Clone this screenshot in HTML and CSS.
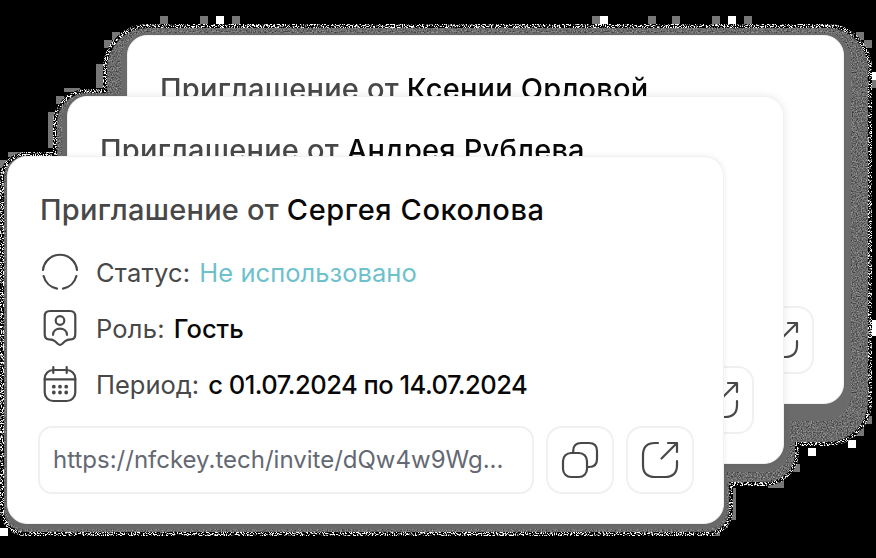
FILE: index.html
```html
<!DOCTYPE html>
<html lang="ru">
<head>
<meta charset="utf-8">
<title>Приглашения</title>
<link rel="stylesheet" href="styles.css">
</head>
<body>
<main class="stage">
  <svg class="halo" width="876" height="558" viewBox="0 0 876 558" aria-hidden="true">
    <defs>
      <filter id="speckle" x="0" y="0" width="876" height="558" filterUnits="userSpaceOnUse" color-interpolation-filters="sRGB">
        <feTurbulence type="fractalNoise" baseFrequency="0.9" numOctaves="2" seed="4"/>
        <feColorMatrix values="9 0 0 0 -4.4  9 0 0 0 -4.4  9 0 0 0 -4.4  0 0 0 0 1"/>
        <feComposite in2="SourceGraphic" operator="in"/>
      </filter>
      <filter id="grain" x="0" y="0" width="876" height="558" filterUnits="userSpaceOnUse" color-interpolation-filters="sRGB">
        <feTurbulence type="fractalNoise" baseFrequency="0.8" numOctaves="2" seed="9"/>
        <feColorMatrix values="0.7 0 0 0 0.07  0.7 0 0 0 0.07  0.7 0 0 0 0.07  0 0 0 0 1"/>
        <feComposite in2="SourceGraphic" operator="in"/>
      </filter>
    </defs>
    <g fill="#777">
      <path d="M160 16h8v8h-8zM200 16h8v8h-8zM232 16h8v8h-8zM592 16h8v8h-8zM648 16h8v8h-8zM672 16h8v8h-8zM712 16h8v8h-8zM744 16h8v8h-8zM112 32h8v8h-8zM104 40h8v8h-8zM96 64h8v24h-8zM56 96h8v8h-8zM48 112h8v36h-8zM64 88h16v4H64zM8 152h16v5H8zM0 160h8v8H0zM856 32h8v8h-8zM864 40h8v8h-8zM872 80h4v8h-4zM864 416h8v8h-8zM856 424h8v12h-8zM792 464h8v8h-8zM768 480h16v8h-16zM728 488h8v32h-8zM720 520h8v8h-8zM712 528h8v8h-8z"/>
      <path fill="#fff" d="M216 16h8v8h-8zM600 16h8v8h-8zM728 16h8v8h-8zM872 72h4v8h-4zM872 320h4v16h-4zM848 440h8v8h-8zM808 448h8v8h-8zM0 528h8v8H0z"/>
    </g>
    <g fill="none" stroke="#fff" stroke-width="4" filter="url(#speckle)">
      <rect x="105" y="26" width="765" height="418" rx="43"/>
      <rect x="55" y="91" width="742" height="393" rx="32"/>
      <rect x="2" y="154" width="729" height="380" rx="24"/>
    </g>
    <g filter="url(#grain)">
      <rect x="107" y="28" width="761" height="414" rx="41"/>
      <rect x="57" y="93" width="738" height="389" rx="30"/>
      <rect x="4" y="156" width="725" height="376" rx="22"/>
    </g>
    <g fill="#6b6b6b">
      <rect x="121" y="33" width="730" height="388" rx="27"/>
      <rect x="62" y="95" width="728" height="377" rx="25"/>
      <rect x="6" y="157" width="721" height="372" rx="21"/>
    </g>
  </svg>

  <article class="card card-back">
    <h2 class="title"><span class="muted title-label">Приглашение от</span> <span class="name-back">Ксении Орловой</span></h2>
    <div class="actions">
      <span class="button"><svg class="icon" viewBox="0 0 40 40"><use href="#open"/></svg></span>
    </div>
  </article>

  <article class="card card-middle">
    <h2 class="title"><span class="muted title-label">Приглашение от</span> <span class="name-middle">Андрея Рублева</span></h2>
    <div class="actions">
      <span class="button"><svg class="icon" viewBox="0 0 40 40"><use href="#open"/></svg></span>
    </div>
  </article>

  <article class="card card-front">
    <h2 class="title"><span class="muted title-label">Приглашение от</span> <span class="name-front">Сергея Соколова</span></h2>
    <dl class="details">
      <div class="row">
        <svg class="icon" viewBox="0 0 40 40"><path d="M3 18A17.1 17.1 0 0 1 37 18M36.4 24A17.1 17.1 0 0 1 23 36.6M17 36.6A17.1 17.1 0 0 1 3.6 24"/></svg>
        <dt class="muted label-status">Статус:</dt><dd class="unused">Не использовано</dd>
      </div>
      <div class="row">
        <svg class="icon" viewBox="0 0 40 40"><path d="M10 3H30Q35.3 3 35.3 8.5V26Q35.3 31.3 31 31.3Q27 31.3 25 33.2L22 36Q20 37.6 18 36L15 33.2Q13 31.3 9 31.3Q4.7 31.3 4.7 26V8.5Q4.7 3 10 3Z"/><circle cx="20" cy="12.5" r="4.3"/><path d="M13 26.8C13.4 18.6 26.6 18.6 27 26.8"/></svg>
        <dt class="muted label-role">Роль:</dt><dd class="role">Гость</dd>
      </div>
      <div class="row">
        <svg class="icon" viewBox="0 0 40 40"><rect x="4.7" y="6" width="30.6" height="31" rx="8.5"/><path d="M4.7 15.3H35.3M13.3 3V9M26.7 3V9"/><path class="dots" d="M13.8 22.7h.01M20 22.7h.01M26.2 22.7h.01M13.8 28.5h.01M20 28.5h.01M26.2 28.5h.01"/></svg>
        <dt class="muted label-period">Период:</dt><dd class="period">с 01.07.2024 по 14.07.2024</dd>
      </div>
    </dl>
    <div class="actions">
      <div class="link">https://nfckey.tech/invite/dQw4w9Wg...</div>
      <span class="button"><svg class="icon" viewBox="0 0 40 40"><path d="M13.2 12.5V11Q13.2 3 21.2 3H29Q37 3 37 11V19Q37 27 29 27H27.5"/><rect x="3" y="13" width="24" height="24" rx="8"/></svg></span>
      <span class="button"><svg class="icon" viewBox="0 0 40 40"><g id="open"><path d="M18 3H15Q3 3 3 15V25Q3 37 15 37H25Q37 37 37 25V21"/><path d="M21.5 18.5L36.7 3.3M28 3H37V12"/></g></svg></span>
    </div>
  </article>
</main>
</body>
</html>
```
FILE: styles.css
```css
* { box-sizing: border-box; }

body { margin: 0; background: #000; }

.stage {
  position: relative;
  width: 876px;
  height: 558px;
  overflow: hidden;
  font-family: Inter, "Liberation Sans", sans-serif;
  color: #080808;
}

.halo { position: absolute; inset: 0; }

.card {
  position: absolute;
  display: flex;
  flex-direction: column;
  width: 717px;
  height: 368px;
  padding: 33px 29px 29px 30px;
  border: 1px solid #f1f1f1;
  border-radius: 20px;
  background: #fff;
}

.card-back { left: 127px; top: 35px; height: 369px; filter: blur(0.7px); }
.card-middle { left: 67px; top: 96px; filter: blur(0.4px); box-shadow: 0 0 10px rgb(0 0 0 / 9%); }
.card-front { left: 7px; top: 156px; box-shadow: 0 0 6px rgb(0 0 0 / 8%); }

.title {
  margin: 0;
  padding-left: 2px;
  font-size: 29px;
  line-height: 40px;
  font-weight: 500;
  white-space: nowrap;
}

.title-label { letter-spacing: 0.25px; }
.name-back, .name-middle { letter-spacing: 0.2px; }
.name-front { letter-spacing: 0.6px; }

.muted { color: #484848; }

.details { margin: 18px 0 0; display: flex; flex-direction: column; gap: 8px; }

.row {
  display: flex;
  align-items: center;
  height: 48px;
  padding-left: 2px;
  font-size: 25.5px;
  white-space: nowrap;
}

.row dt { margin-left: 16px; }
.row dd { margin: 0 0 0 9px; font-weight: 500; }
.row .unused { color: #6dc1cb; font-weight: 400; letter-spacing: 0.05px; }
.row .period { letter-spacing: -0.49px; }
.label-status { letter-spacing: 0.2px; }
.label-role { letter-spacing: 0.2px; }

.icon {
  flex: none;
  width: 40px;
  height: 40px;
  fill: none;
  stroke: #484848;
  stroke-width: 2.2;
  stroke-linecap: round;
  stroke-linejoin: round;
}

.dots { stroke-width: 3.8; }

.actions {
  display: flex;
  justify-content: flex-end;
  gap: 12px;
  margin-top: auto;
}

.link {
  flex: 1;
  height: 68px;
  padding-left: 13px;
  border: 2px solid #f0f0f0;
  border-radius: 14px;
  font-size: 24px;
  line-height: 64px;
  color: #646873;
  white-space: nowrap;
}

.button {
  display: flex;
  align-items: center;
  justify-content: center;
  width: 68px;
  height: 68px;
  border: 2px solid #f0f0f0;
  border-radius: 16px;
}
```
